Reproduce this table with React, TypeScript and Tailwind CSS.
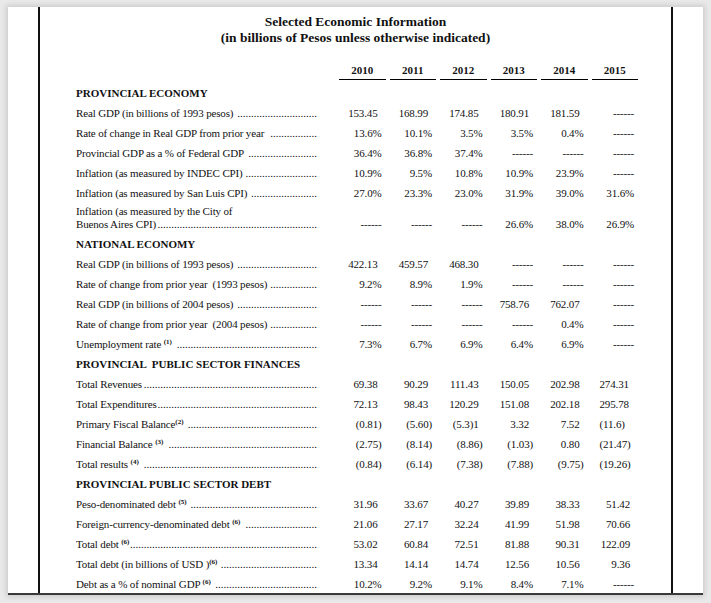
import React, { useLayoutEffect, useRef, useState } from "react";

const D = "------";

type Row =
  | { h: string }
  | { l: React.ReactNode; v: string[]; two?: React.ReactNode };

const Sup = ({ n }: { n: number }) => (
  <sup className="text-[7px] font-bold tracking-normal">({n})</sup>
);

const rows: Row[] = [
  { h: "PROVINCIAL ECONOMY" },
  { l: "Real GDP (in billions of 1993 pesos) ", v: ["153.45", "168.99", "174.85", "180.91", "181.59", D] },
  { l: "Rate of change in Real GDP from prior year  ", v: ["13.6%", "10.1%", "3.5%", "3.5%", "0.4%", D] },
  { l: "Provincial GDP as a % of Federal GDP ", v: ["36.4%", "36.8%", "37.4%", D, D, D] },
  { l: "Inflation (as measured by INDEC CPI)", v: ["10.9%", "9.5%", "10.8%", "10.9%", "23.9%", D] },
  { l: "Inflation (as measured by San Luis CPI) ", v: ["27.0%", "23.3%", "23.0%", "31.9%", "39.0%", "31.6%"] },
  { l: "Buenos Aires CPI)", two: "Inflation (as measured by the City of", v: [D, D, D, "26.6%", "38.0%", "26.9%"] },
  { h: "NATIONAL ECONOMY" },
  { l: "Real GDP (in billions of 1993 pesos) ", v: ["422.13", "459.57", "468.30", D, D, D] },
  { l: "Rate of change from prior year  (1993 pesos)", v: ["9.2%", "8.9%", "1.9%", D, D, D] },
  { l: "Real GDP (in billions of 2004 pesos) ", v: [D, D, D, "758.76", "762.07", D] },
  { l: "Rate of change from prior year  (2004 pesos)", v: [D, D, D, D, "0.4%", D] },
  { l: <>Unemployment rate <Sup n={1} /> </>, v: ["7.3%", "6.7%", "6.9%", "6.4%", "6.9%", D] },
  { h: "PROVINCIAL  PUBLIC SECTOR FINANCES" },
  { l: "Total Revenues", v: ["69.38", "90.29", "111.43", "150.05", "202.98", "|274.31"] },
  { l: "Total Expenditures", v: ["72.13", "98.43", "120.29", "151.08", "202.18", "|295.78"] },
  { l: <>Primary Fiscal Balance<Sup n={2} /> </>, v: ["(0.81)", "(5.60)", "(5.3)1", "3.32", "7.52", "|(11.6)"] },
  { l: <>Financial Balance <Sup n={3} /> </>, v: ["(2.75)", "(8.14)", "(8.86)", "(1.03)", "0.80", "|(21.47)"] },
  { l: <>Total results <Sup n={4} /> </>, v: ["(0.84)", "(6.14)", "(7.38)", "(7.88)", "(9.75)", "|(19.26)"] },
  { h: "PROVINCIAL PUBLIC SECTOR DEBT" },
  { l: <>Peso-denominated debt <Sup n={5} /> </>, v: ["31.96", "33.67", "40.27", "39.89", "38.33", "51.42"] },
  { l: <>Foreign-currency-denominated debt <Sup n={6} /> </>, v: ["21.06", "27.17", "32.24", "41.99", "51.98", "70.66"] },
  { l: <>Total debt <Sup n={6} /></>, v: ["53.02", "60.84", "72.51", "81.88", "90.31", "122.09"] },
  { l: <>Total debt (in billions of USD )<Sup n={6} /> </>, v: ["13.34", "14.14", "14.74", "12.56", "10.56", "9.36"] },
  { l: <>Debt as a % of nominal GDP <Sup n={6} /> </>, v: ["10.2%", "9.2%", "9.1%", "8.4%", "7.1%", D] },
];

function Leader() {
  const ref = useRef<HTMLSpanElement>(null);
  const [n, setN] = useState(0);
  useLayoutEffect(() => {
    const el = ref.current;
    if (!el) return;
    const w = el.getBoundingClientRect().width;
    let dw = 2.75;
    const ctx = document.createElement("canvas").getContext("2d");
    if (ctx) {
      ctx.font = '11px "Liberation Serif"';
      const m = ctx.measureText("..........").width / 10;
      if (m > 1) dw = m;
    }
    setN(Math.max(0, Math.floor((w - 0.5) / dw)));
  }, []);
  return (
    <span ref={ref} className="flex-1 min-w-0 overflow-hidden text-right tracking-normal">
      {".".repeat(n)}
    </span>
  );
}

function Label({ children }: { children: React.ReactNode }) {
  return (
    <div className="flex w-[241px] overflow-hidden whitespace-pre">
      <span className="shrink-0">{children}</span>
      <Leader />
    </div>
  );
}

function Cell({ v }: { v: string }) {
  if (v.startsWith("|")) {
    return <div className="w-[50.5px] shrink-0 pl-[10px] text-left whitespace-nowrap">{v.slice(1)}</div>;
  }
  const narrow = /[%)\-]$/.test(v);
  return (
    <div className={`w-[50.5px] shrink-0 text-right whitespace-nowrap ${narrow ? "pr-[6px]" : "pr-[10px]"}`}>
      {v}
    </div>
  );
}

export default function App() {
  const years = ["2010", "2011", "2012", "2013", "2014", "2015"];
  return (
    <div
      className="w-[711px] h-[603px] bg-[#e9e9e9] pt-[7px] px-[8px] text-[#111]"
      style={{ fontFamily: '"Liberation Serif", "Times New Roman", serif' }}
    >
      <div className="h-[588px] bg-white border-b-2 border-[#3a3a3a] shadow-[0_0_5px_2px_rgba(0,0,0,0.12)] px-[30px]">
        <div className="h-full border-x-2 border-[#111] pl-[36px] flex flex-col">
          <div className="pt-[7px] text-center font-bold text-[13.5px] leading-[16px] -ml-[36px]">
            <div>Selected Economic Information</div>
            <div>(in billions of Pesos unless otherwise indicated)</div>
          </div>
          <div className="mt-[18px] flex text-[11px] font-bold">
            <div className="w-[261px] shrink-0" />
            {years.map((y) => (
              <div key={y} className="w-[50.5px] shrink-0 px-[2px]">
                <div className="border-b border-black text-center leading-[13px] pb-[2px]">{y}</div>
              </div>
            ))}
          </div>
          <div className="mt-[3px] text-[11px] tracking-[-0.15px]">
            {rows.map((r, i) => {
              if ("h" in r) {
                return (
                  <div key={i} className="h-[20px] flex items-center font-bold whitespace-pre tracking-normal">
                    {r.h}
                  </div>
                );
              }
              if (r.two) {
                return (
                  <div key={i} className="h-[31px] flex items-end pb-[3px] leading-[13px]">
                    <div className="w-[241px] shrink-0">
                      <div className="whitespace-pre">{r.two}</div>
                      <Label>{r.l}</Label>
                    </div>
                    <div className="w-[20px] shrink-0" />
                    {r.v.map((v, j) => (
                      <Cell key={j} v={v} />
                    ))}
                  </div>
                );
              }
              return (
                <div key={i} className="h-[20px] flex items-center">
                  <div className="w-[241px] shrink-0">
                    <Label>{r.l}</Label>
                  </div>
                  <div className="w-[20px] shrink-0" />
                  {r.v.map((v, j) => (
                    <Cell key={j} v={v} />
                  ))}
                </div>
              );
            })}
          </div>
        </div>
      </div>
    </div>
  );
}
